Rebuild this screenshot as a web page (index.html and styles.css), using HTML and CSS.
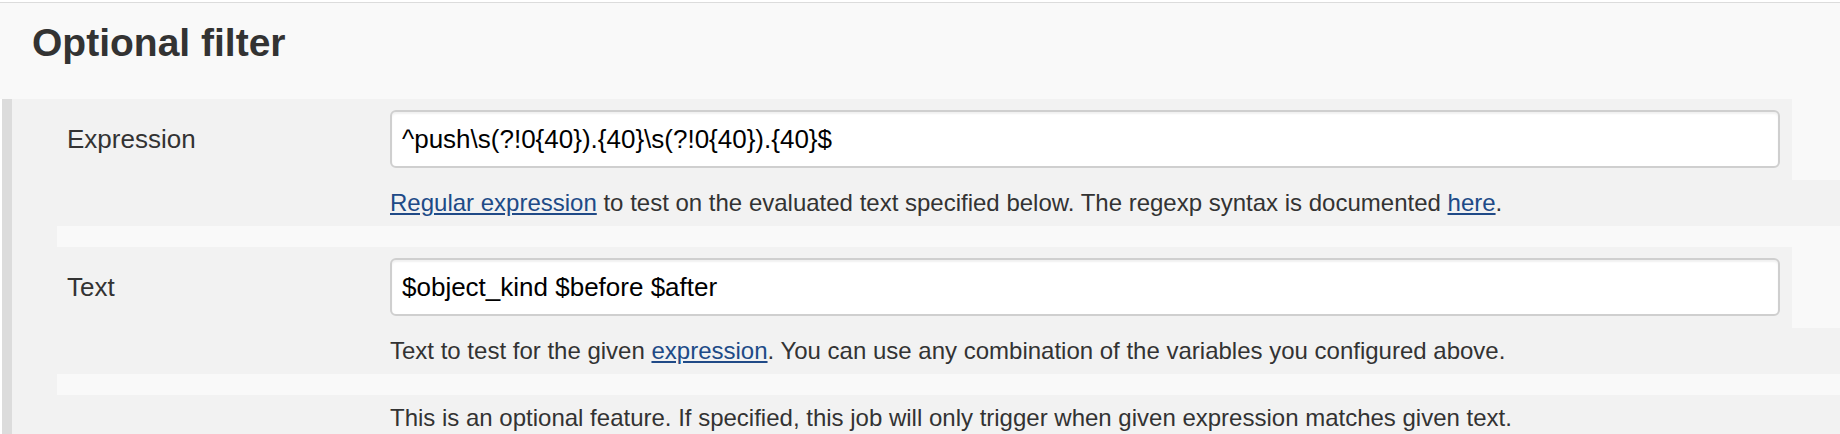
FILE: index.html
```html
<!DOCTYPE html>
<html lang="en">
<head>
<meta charset="utf-8">
<title>Optional filter</title>
<link rel="stylesheet" href="styles.css">
</head>
<body>
<div class="page">
  <div class="section-header">
    <h2 class="section-title">Optional filter</h2>
  </div>
  <div class="section">
    <div class="rows">
      <div class="row-main">
        <label class="row-label">Expression</label>
        <input class="row-input" type="text" value="^push\s(?!0{40}).{40}\s(?!0{40}).{40}$">
      </div>
      <div class="row-help"><a href="#">Regular expression</a> to test on the evaluated text specified below. The regexp syntax is documented <a href="#">here</a>.</div>
      <div class="row-gap"></div>
      <div class="row-main">
        <label class="row-label">Text</label>
        <input class="row-input" type="text" value="$object_kind $before $after">
      </div>
      <div class="row-help">Text to test for the given <a href="#">expression</a>. You can use any combination of the variables you configured above.</div>
      <div class="row-gap"></div>
      <div class="row-help">This is an optional feature. If specified, this job will only trigger when given expression matches given text.</div>
    </div>
  </div>
</div>
</body>
</html>
```

FILE: styles.css
```css
html, body {
  margin: 0;
  padding: 0;
}

body {
  background: #ffffff;
  font-family: "Liberation Sans", Arial, Helvetica, sans-serif;
  color: #333333;
  overflow: hidden;
}

.page {
  padding-top: 2px;
  background: #ffffff;
}

.section-header {
  border-top: 1px solid #dcdcdc;
  background: #f9f9f9;
  height: 97px;
  box-sizing: border-box;
  padding: 17px 0 0 32px;
}

.section-title {
  margin: 0;
  font-size: 39px;
  line-height: 45px;
  font-weight: bold;
  color: #333333;
}

.section {
  margin-left: 2px;
  border-left: 10px solid #dcdcdc;
  background: #f2f2f2;
  padding-left: 45px;
}

.rows {
  background: #f9f9f9;
  display: flex;
  flex-direction: column;
}

.row-main {
  width: 1735px;
  box-sizing: border-box;
  background: #f2f2f2;
  display: grid;
  grid-template-columns: 333px 1390px;
  align-items: center;
  padding: 11px 0 12px 0;
}

.row-label {
  padding-left: 10px;
  font-size: 26px;
  line-height: 30px;
  color: #333333;
}

.row-input {
  box-sizing: border-box;
  width: 1390px;
  height: 58px;
  margin: 0;
  padding: 0 10px;
  border: 2px solid #cfcfcf;
  border-radius: 6px;
  background: #ffffff;
  box-shadow: inset 0 2px 2px rgba(0, 0, 0, 0.06);
  font-family: "Liberation Sans", Arial, Helvetica, sans-serif;
  font-size: 26px;
  color: #000000;
  outline: none;
}

.row-help {
  background: #f2f2f2;
  height: 46px;
  line-height: 46px;
  padding-left: 333px;
  font-size: 24px;
  color: #333333;
  white-space: nowrap;
}

.row-help a {
  color: #204a87;
  text-decoration: underline;
}

.row-gap {
  height: 21px;
}
```
